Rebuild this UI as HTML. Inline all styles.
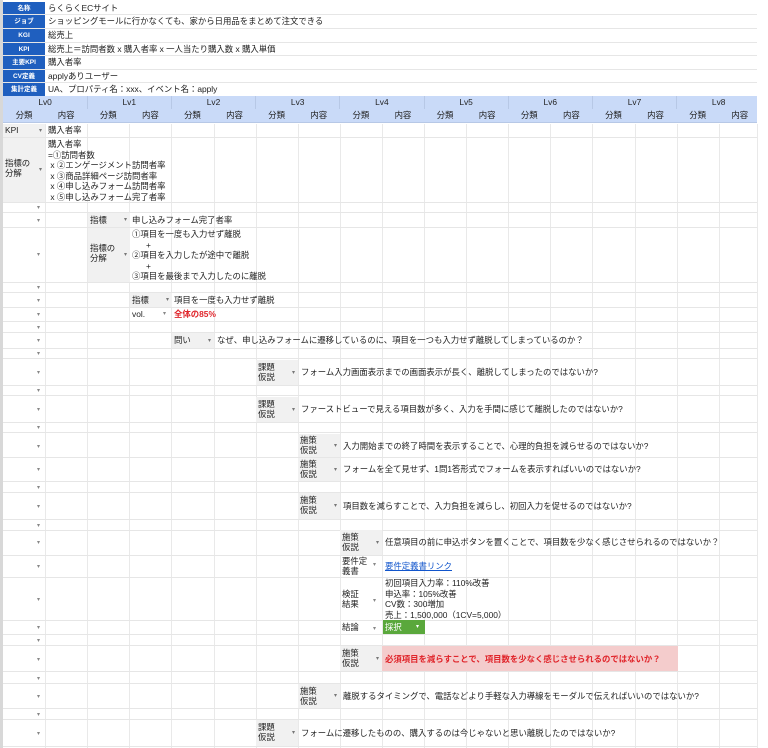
<!DOCTYPE html>
<html><head><meta charset="utf-8">
<style>
*{margin:0;padding:0;box-sizing:border-box}
body{width:768px;height:748px;overflow:hidden;background:#fff;font-family:"Liberation Sans","Noto Sans CJK JP",sans-serif;font-size:8.4px;color:#222;position:relative}
.a{position:absolute}
.hl{position:absolute;left:3px;width:754px;height:1px;background:#e6e6e6}
.vl{position:absolute;top:124px;height:624px;width:1px;background:#e9e9e9}
.bl{position:absolute;left:3px;width:42px;background:#1f5fbf;color:#fff;font-weight:bold;font-size:6.5px;text-align:center;height:13px;line-height:13px}
.ht{position:absolute;left:48px;height:13px;line-height:13px;font-size:8.4px}
.lab{position:absolute;background:#f1f1f1;width:42px;padding-left:2px;line-height:10px}
.lab:after{content:"▾";position:absolute;right:3px;top:50%;margin-top:-5px;color:#777;font-size:6px}
.ar{position:absolute;left:37px;color:#888;font-size:6px;line-height:6px}
.t{position:absolute;line-height:10px;white-space:nowrap}
.lv{position:absolute;top:96px;height:13px;line-height:13px;text-align:center;width:84.2px}
.sub{position:absolute;top:109px;height:13px;line-height:13px;text-align:center;width:42.1px}
</style></head><body>
<div class="a" style="left:0;top:0;width:3px;height:748px;background:#d8d8d8"></div>
<div class="a" style="left:3px;top:0;width:754px;height:96px;background:#fff"></div>
<div class="bl" style="top:2px">名称</div><div class="ht" style="top:2px">らくらくECサイト</div>
<div class="bl" style="top:15px">ジョブ</div><div class="ht" style="top:15px">ショッピングモールに行かなくても、家から日用品をまとめて注文できる</div>
<div class="bl" style="top:29px">KGI</div><div class="ht" style="top:29px">総売上</div>
<div class="bl" style="top:43px">KPI</div><div class="ht" style="top:43px">総売上＝訪問者数 x 購入者率 x 一人当たり購入数 x 購入単価</div>
<div class="bl" style="top:56px">主要KPI</div><div class="ht" style="top:56px">購入者率</div>
<div class="bl" style="top:70px">CV定義</div><div class="ht" style="top:70px">applyありユーザー</div>
<div class="bl" style="top:83px">集計定義</div><div class="ht" style="top:83px">UA、プロパティ名：xxx、イベント名：apply</div>
<div class="hl" style="top:14px"></div><div class="hl" style="top:28px"></div><div class="hl" style="top:42px"></div><div class="hl" style="top:55px"></div><div class="hl" style="top:69px"></div><div class="hl" style="top:82px"></div>
<div class="a" style="left:3px;top:96px;width:754px;height:27px;background:#c9daf8;border-bottom:1px solid #b7c8e6"></div>
<div class="lv" style="left:3px">Lv0</div><div class="lv" style="left:87.2px">Lv1</div><div class="lv" style="left:171.4px">Lv2</div><div class="lv" style="left:255.6px">Lv3</div><div class="lv" style="left:339.8px">Lv4</div><div class="lv" style="left:424px">Lv5</div><div class="lv" style="left:508.2px">Lv6</div><div class="lv" style="left:592.4px">Lv7</div><div class="lv" style="left:676.6px">Lv8</div>
<div class="sub" style="left:3px">分類</div><div class="sub" style="left:45.1px">内容</div><div class="sub" style="left:87.2px">分類</div><div class="sub" style="left:129.3px">内容</div><div class="sub" style="left:171.4px">分類</div><div class="sub" style="left:213.5px">内容</div><div class="sub" style="left:255.6px">分類</div><div class="sub" style="left:297.7px">内容</div><div class="sub" style="left:339.8px">分類</div><div class="sub" style="left:381.9px">内容</div><div class="sub" style="left:424px">分類</div><div class="sub" style="left:466.1px">内容</div><div class="sub" style="left:508.2px">分類</div><div class="sub" style="left:550.3px">内容</div><div class="sub" style="left:592.4px">分類</div><div class="sub" style="left:634.5px">内容</div><div class="sub" style="left:676.6px">分類</div><div class="sub" style="left:718.7px">内容</div>
<div class="a" style="left:87px;top:96px;width:1px;height:13px;background:#b7c8e6"></div><div class="a" style="left:171px;top:96px;width:1px;height:13px;background:#b7c8e6"></div><div class="a" style="left:255px;top:96px;width:1px;height:13px;background:#b7c8e6"></div><div class="a" style="left:339px;top:96px;width:1px;height:13px;background:#b7c8e6"></div><div class="a" style="left:424px;top:96px;width:1px;height:13px;background:#b7c8e6"></div><div class="a" style="left:508px;top:96px;width:1px;height:13px;background:#b7c8e6"></div><div class="a" style="left:592px;top:96px;width:1px;height:13px;background:#b7c8e6"></div><div class="a" style="left:676px;top:96px;width:1px;height:13px;background:#b7c8e6"></div>
<div class="vl" style="left:45px"></div><div class="vl" style="left:87px"></div><div class="vl" style="left:129px"></div><div class="vl" style="left:171px"></div><div class="vl" style="left:214px"></div><div class="vl" style="left:256px"></div><div class="vl" style="left:298px"></div><div class="vl" style="left:340px"></div><div class="vl" style="left:382px"></div><div class="vl" style="left:424px"></div><div class="vl" style="left:466px"></div><div class="vl" style="left:508px"></div><div class="vl" style="left:550px"></div><div class="vl" style="left:592px"></div><div class="vl" style="left:635px"></div><div class="vl" style="left:677px"></div><div class="vl" style="left:719px"></div><div class="vl" style="left:757px"></div>
<div class="hl" style="top:137px"></div><div class="hl" style="top:202px"></div><div class="hl" style="top:212px"></div><div class="hl" style="top:227px"></div><div class="hl" style="top:282px"></div><div class="hl" style="top:292px"></div><div class="hl" style="top:307px"></div><div class="hl" style="top:321px"></div><div class="hl" style="top:332px"></div><div class="hl" style="top:348px"></div><div class="hl" style="top:358px"></div><div class="hl" style="top:385px"></div><div class="hl" style="top:395px"></div><div class="hl" style="top:422px"></div><div class="hl" style="top:432px"></div><div class="hl" style="top:457px"></div><div class="hl" style="top:481px"></div><div class="hl" style="top:492px"></div><div class="hl" style="top:519px"></div><div class="hl" style="top:530px"></div><div class="hl" style="top:555px"></div><div class="hl" style="top:577px"></div><div class="hl" style="top:620px"></div><div class="hl" style="top:634px"></div><div class="hl" style="top:645px"></div><div class="hl" style="top:671px"></div><div class="hl" style="top:683px"></div><div class="hl" style="top:708px"></div><div class="hl" style="top:719px"></div><div class="hl" style="top:746px"></div>
<div class="ar" style="top:205px">▾</div><div class="ar" style="top:218px">▾</div><div class="ar" style="top:252px">▾</div><div class="ar" style="top:285px">▾</div><div class="ar" style="top:298px">▾</div><div class="ar" style="top:312px">▾</div><div class="ar" style="top:325px">▾</div><div class="ar" style="top:338px">▾</div><div class="ar" style="top:351px">▾</div><div class="ar" style="top:370px">▾</div><div class="ar" style="top:388px">▾</div><div class="ar" style="top:407px">▾</div><div class="ar" style="top:425px">▾</div><div class="ar" style="top:444px">▾</div><div class="ar" style="top:467px">▾</div><div class="ar" style="top:485px">▾</div><div class="ar" style="top:504px">▾</div><div class="ar" style="top:523px">▾</div><div class="ar" style="top:540px">▾</div><div class="ar" style="top:564px">▾</div><div class="ar" style="top:597px">▾</div><div class="ar" style="top:625px">▾</div><div class="ar" style="top:638px">▾</div><div class="ar" style="top:657px">▾</div><div class="ar" style="top:676px">▾</div><div class="ar" style="top:694px">▾</div><div class="ar" style="top:712px">▾</div><div class="ar" style="top:731px">▾</div>
<div class="lab" style="left:3px;top:124px;height:13px;padding-top:1px">KPI</div><div class="t" style="left:48px;top:125px">購入者率</div>
<div class="lab" style="left:3px;top:138px;height:64px;padding-top:20px">指標の<br>分解</div>
<div class="t" style="left:48px;top:139px;line-height:10.5px">購入者率<br>=①訪問者数<br>&nbsp;x ②エンゲージメント訪問者率<br>&nbsp;x ③商品詳細ページ訪問者率<br>&nbsp;x ④申し込みフォーム訪問者率<br>&nbsp;x ⑤申し込みフォーム完了者率</div>
<div class="lab" style="left:88px;top:213px;height:14px;padding-top:2px">指標</div><div class="t" style="left:132px;top:215px">申し込みフォーム完了者率</div>
<div class="lab" style="left:88px;top:228px;height:54px;padding-top:15px">指標の<br>分解</div>
<div class="t" style="left:132px;top:229px;line-height:10.5px">①項目を一度も入力せず離脱<br>&nbsp;&nbsp;&nbsp;&nbsp;&nbsp;&nbsp;+<br>②項目を入力したが途中で離脱<br>&nbsp;&nbsp;&nbsp;&nbsp;&nbsp;&nbsp;+<br>③項目を最後まで入力したのに離脱</div>
<div class="lab" style="left:130px;top:293px;height:14px;padding-top:2px">指標</div><div class="t" style="left:174px;top:295px">項目を一度も入力せず離脱</div>
<div class="t" style="left:132px;top:309px">vol.</div><div class="t" style="left:163px;top:309px;color:#888;font-size:6px">▾</div><div class="t" style="left:174px;top:309px;color:#e0242a;font-weight:bold">全体の85%</div>
<div class="lab" style="left:172px;top:333px;height:15px;padding-top:2px">問い</div><div class="t" style="left:217px;top:335px">なぜ、申し込みフォームに遷移しているのに、項目を一つも入力せず離脱してしまっているのか？</div>
<div class="lab" style="left:256px;top:360px;height:25px;padding-top:2px">課題<br>仮説</div><div class="t" style="left:301px;top:367px">フォーム入力画面表示までの画面表示が長く、離脱してしまったのではないか?</div>
<div class="lab" style="left:256px;top:397px;height:25px;padding-top:2px">課題<br>仮説</div><div class="t" style="left:301px;top:404px">ファーストビューで見える項目数が多く、入力を手間に感じて離脱したのではないか?</div>
<div class="lab" style="left:298px;top:434px;height:23px;padding-top:1px">施策<br>仮説</div><div class="t" style="left:343px;top:441px">入力開始までの終了時間を表示することで、心理的負担を減らせるのではないか?</div>
<div class="lab" style="left:298px;top:458px;height:23px;padding-top:1px">施策<br>仮説</div><div class="t" style="left:343px;top:464px">フォームを全て見せず、1問1答形式でフォームを表示すればいいのではないか?</div>
<div class="lab" style="left:298px;top:493px;height:26px;padding-top:2px">施策<br>仮説</div><div class="t" style="left:343px;top:501px">項目数を減らすことで、入力負担を減らし、初回入力を促せるのではないか?</div>
<div class="lab" style="left:340px;top:530px;height:25px;padding-top:2px">施策<br>仮説</div><div class="t" style="left:385px;top:537px">任意項目の前に申込ボタンを置くことで、項目数を少なく感じさせられるのではないか？</div>
<div class="t" style="left:342px;top:556px;line-height:10px">要件定<br>義書</div><div class="t" style="left:373px;top:560px;color:#888;font-size:6px">▾</div><div class="t" style="left:385px;top:561px;color:#1155cc;text-decoration:underline">要件定義書リンク</div>
<div class="t" style="left:342px;top:589px;line-height:10px">検証<br>結果</div><div class="t" style="left:373px;top:596px;color:#888;font-size:6px">▾</div>
<div class="t" style="left:385px;top:578px;line-height:10.5px">初回項目入力率：110%改善<br>申込率：105%改善<br>CV数：300増加<br>売上：1,500,000（1CV=5,000）</div>
<div class="t" style="left:342px;top:622px">結論</div><div class="t" style="left:373px;top:624px;color:#888;font-size:6px">▾</div>
<div class="a" style="left:383px;top:620px;width:42px;height:14px;background:#5aa83c;color:#fff;line-height:14px;padding-left:2px">採択<span style="position:absolute;right:6px;font-size:6px">▾</span></div>
<div class="lab" style="left:340px;top:646px;height:25px;padding-top:2px">施策<br>仮説</div>
<div class="a" style="left:382px;top:646px;width:296px;height:25px;background:#f4cccc"></div><div class="t" style="left:385px;top:654px;color:#e0242a;font-weight:bold">必須項目を減らすことで、項目数を少なく感じさせられるのではないか？</div>
<div class="lab" style="left:298px;top:684px;height:24px;padding-top:2px">施策<br>仮説</div><div class="t" style="left:343px;top:691px">離脱するタイミングで、電話などより手軽な入力導線をモーダルで伝えればいいのではないか?</div>
<div class="lab" style="left:256px;top:720px;height:26px;padding-top:2px">課題<br>仮説</div><div class="t" style="left:301px;top:728px">フォームに遷移したものの、購入するのは今じゃないと思い離脱したのではないか?</div>
</body></html>
